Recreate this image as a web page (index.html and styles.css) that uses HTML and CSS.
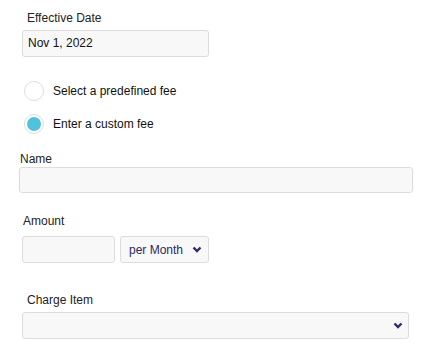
FILE: index.html
```html
<!DOCTYPE html>
<html lang="en">
<head>
    <meta charset="UTF-8">
    <meta name="viewport" content="width=device-width, initial-scale=1.0">
    <title>Custom Fee</title>
    <link rel="stylesheet" href="styles.css">
</head>
<body>
    <div class="form">
        <div class="dateField">
            <div class="label">Effective Date</div>
            <div class="box dateBox">Nov 1, 2022</div>
        </div>

        <div class="radios">
            <div class="radioRow">
                <span class="radio"></span>
                <span class="radioText">Select a predefined fee</span>
            </div>
            <div class="radioRow">
                <span class="radio checked"></span>
                <span class="radioText">Enter a custom fee</span>
            </div>
        </div>

        <div class="nameField">
            <div class="label">Name</div>
            <div class="box nameBox"></div>
        </div>

        <div class="amountField">
            <div class="label">Amount</div>
            <div class="amountRow">
                <div class="box amountBox"></div>
                <div class="box selectBox periodBox">
                    <span>per Month</span>
                    <svg class="chevron" width="10" height="7" viewBox="0 0 10 7"><path d="M1.5 1.5 L5 5 L8.5 1.5" fill="none" stroke="#2e2b6e" stroke-width="2.4"/></svg>
                </div>
            </div>
        </div>

        <div class="chargeField">
            <div class="label">Charge Item</div>
            <div class="box selectBox chargeBox">
                <span></span>
                <svg class="chevron" width="10" height="7" viewBox="0 0 10 7"><path d="M1.5 1.5 L5 5 L8.5 1.5" fill="none" stroke="#2e2b6e" stroke-width="2.4"/></svg>
            </div>
        </div>
    </div>
</body>
</html>
```

FILE: styles.css
```css
body {
    margin: 0;
    background: #fff;
    font-family: "Liberation Sans", Arial, sans-serif;
    font-size: 12px;
    color: #222;
}

.form {
    display: flex;
    flex-direction: column;
    padding-top: 11px;
}

.label {
    line-height: 14px;
    height: 14px;
}

.box {
    box-sizing: border-box;
    border: 1px solid #dcdcdc;
    border-radius: 3px;
    background: #f8f8f8;
}

/* effective date */
.dateField {
    margin-left: 22px;
}

.dateField .label {
    padding-left: 5px;
}

.dateBox {
    margin-top: 5px;
    width: 187px;
    height: 27px;
    line-height: 25px;
    padding-left: 5px;
    color: #111;
}

/* radio options */
.radios {
    margin-top: 24px;
    margin-left: 24px;
    display: flex;
    flex-direction: column;
    gap: 13px;
}

.radioRow {
    display: flex;
    align-items: center;
    height: 20px;
}

.radio {
    box-sizing: border-box;
    width: 20px;
    height: 20px;
    border: 1px solid #dedede;
    border-radius: 50%;
    background: #fff;
    display: flex;
    align-items: center;
    justify-content: center;
}

.radio.checked::after {
    content: "";
    width: 14px;
    height: 14px;
    border-radius: 50%;
    background: #50c2de;
}

.radioText {
    margin-left: 9px;
    color: #111;
}

/* name */
.nameField {
    margin-top: 18px;
    margin-left: 19px;
}

.nameField .label {
    padding-left: 1px;
}

.nameBox {
    margin-top: 1px;
    width: 394px;
    height: 26px;
}

/* amount */
.amountField {
    margin-top: 21px;
    margin-left: 22px;
}

.amountField .label {
    padding-left: 1px;
}

.amountRow {
    margin-top: 8px;
    display: flex;
    gap: 5px;
}

.amountBox {
    width: 93px;
    height: 27px;
}

.selectBox {
    display: flex;
    align-items: center;
    justify-content: space-between;
    height: 27px;
}

.periodBox {
    width: 89px;
    padding-left: 8px;
    padding-right: 6px;
    color: #2b2a5e;
}

.chevron {
    display: block;
}

/* charge item */
.chargeField {
    margin-top: 30px;
    margin-left: 22px;
}

.chargeField .label {
    padding-left: 5px;
}

.chargeBox {
    margin-top: 5px;
    width: 387px;
    padding-right: 5px;
}
```
